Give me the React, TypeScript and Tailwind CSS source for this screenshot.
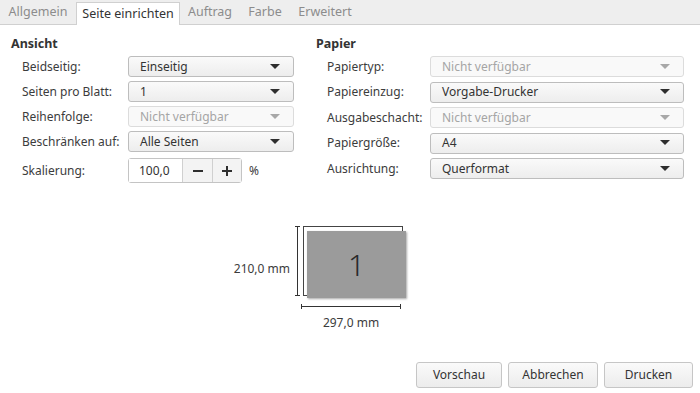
import React from 'react';

const font = { fontFamily: '"Noto Sans", "Open Sans", sans-serif' };

const tabs = [
  { label: 'Allgemein', w: 'w-[76px]' },
  { label: 'Seite einrichten', w: 'w-[104px]', active: true },
  { label: 'Auftrag', w: 'w-[60px]' },
  { label: 'Farbe', w: 'w-[50px]' },
  { label: 'Erweitert', w: 'w-[70px]' },
];

function Caret({ disabled }: { disabled?: boolean }) {
  return (
    <svg width="10" height="6" viewBox="0 0 10 6">
      <path d="M0 0 L10 0 L5 5 Z" fill={disabled ? '#a8a8a8' : '#2e2e2e'} />
    </svg>
  );
}

function Combo({ value, disabled }: { value: string; disabled?: boolean }) {
  return (
    <div
      className={
        'flex h-[21px] w-full items-center justify-between rounded-[3px] border pl-[11px] pr-[13px] ' +
        (disabled
          ? 'border-[#dcdcdc] bg-[#f9f9f9] text-[#a5a5a5]'
          : 'border-[#bdbdbd] bg-gradient-to-b from-[#fafafa] to-[#ededed] text-[#333]')
      }
    >
      <span>{value}</span>
      <Caret disabled={disabled} />
    </div>
  );
}

function Row({ label, children }: { label: string; children: React.ReactNode }) {
  return (
    <div className="flex h-[21px] items-center">
      <span className="shrink-0">{label}</span>
      {children}
    </div>
  );
}

export default function App() {
  return (
    <div className="flex h-[393px] w-[700px] flex-col overflow-hidden bg-white text-[12px] text-[#3c3c3c]" style={font}>
      {/* tab bar */}
      <div className="flex h-[25px] shrink-0 items-end border-b border-[#d0d0d0] bg-[#eeeeee] text-[12.5px]">
        {tabs.map((t) =>
          t.active ? (
            <div
              key={t.label}
              className={`${t.w} -mb-px flex h-[23px] items-center justify-center border border-b-0 border-[#d0d0d0] bg-white text-[#333]`}
            >
              {t.label}
            </div>
          ) : (
            <div key={t.label} className={`${t.w} flex h-[23px] items-center justify-center text-[#8c8c8c]`}>
              {t.label}
            </div>
          )
        )}
      </div>

      {/* settings */}
      <div className="flex pt-[10px]">
        <div className="w-[294px] pl-[11px]">
          <div className="h-[20px] text-[12.5px] font-bold text-[#333]">Ansicht</div>
          <div className="mt-[1px] flex flex-col gap-[4px] pl-[11px]">
            <Row label="Beidseitig:">
              <div className="ml-auto w-[166px]"><Combo value="Einseitig" /></div>
            </Row>
            <Row label="Seiten pro Blatt:">
              <div className="ml-auto w-[166px]"><Combo value="1" /></div>
            </Row>
            <Row label="Reihenfolge:">
              <div className="ml-auto w-[166px]"><Combo value="Nicht verfügbar" disabled /></div>
            </Row>
            <Row label="Beschränken auf:">
              <div className="ml-auto w-[166px]"><Combo value="Alle Seiten" /></div>
            </Row>
            <div className="mt-[2px] flex h-[25px] items-center">
              <span className="w-[106px] shrink-0">Skalierung:</span>
              <div className="flex h-[25px] rounded-[3px] border border-[#c4c4c4]">
                <div className="flex w-[53px] items-center bg-white pl-[10px] text-[#333]">100,0</div>
                <div className="flex w-[30px] items-center justify-center border-l border-[#d0d0d0] bg-[#f3f3f3]">
                  <svg width="10" height="10" viewBox="0 0 10 10"><path d="M0 5 H10" stroke="#2e2e2e" strokeWidth="2" /></svg>
                </div>
                <div className="flex w-[29px] items-center justify-center border-l border-[#d0d0d0] bg-[#f3f3f3]">
                  <svg width="10" height="10" viewBox="0 0 10 10"><path d="M0 5 H10 M5 0 V10" stroke="#2e2e2e" strokeWidth="2" /></svg>
                </div>
              </div>
              <span className="ml-[7px]">%</span>
            </div>
          </div>
        </div>

        <div className="w-[390px] pl-[22px]">
          <div className="h-[20px] text-[12.5px] font-bold text-[#333]">Papier</div>
          <div className="mt-[1px] flex flex-col gap-[4.5px] pl-[11px]">
            <Row label="Papiertyp:">
              <div className="ml-auto w-[254px]"><Combo value="Nicht verfügbar" disabled /></div>
            </Row>
            <Row label="Papiereinzug:">
              <div className="ml-auto w-[254px]"><Combo value="Vorgabe-Drucker" /></div>
            </Row>
            <Row label="Ausgabeschacht:">
              <div className="ml-auto w-[254px]"><Combo value="Nicht verfügbar" disabled /></div>
            </Row>
            <Row label="Papiergröße:">
              <div className="ml-auto w-[254px]"><Combo value="A4" /></div>
            </Row>
            <Row label="Ausrichtung:">
              <div className="ml-auto w-[254px]"><Combo value="Querformat" /></div>
            </Row>
          </div>
        </div>
      </div>

      {/* preview */}
      <div className="mt-[43px] flex flex-col pl-[230px]">
        <div className="flex items-center">
          <span className="mt-[16px] w-[60px] text-right">210,0 mm</span>
          <div className="ml-[5px] flex h-[70px] w-[5px] flex-col items-center">
            <div className="h-px w-[5px] bg-[#333]" />
            <div className="w-px flex-1 bg-[#333]" />
            <div className="h-px w-[5px] bg-[#333]" />
          </div>
          <div className="relative ml-[3px] h-[70px] w-[100px] border border-[#444] bg-white">
            <div className="absolute left-[3px] top-[4px] flex h-[67px] w-[99px] items-center justify-center bg-[#9b9b9b] text-[30px] font-light text-[#2a2a2a] shadow-[1px_1px_2px_rgba(0,0,0,0.35)]">
              1
            </div>
          </div>
        </div>
        <div className="ml-[71px] mt-[8px] flex h-[5px] w-[100px] items-center">
          <div className="h-[5px] w-px bg-[#333]" />
          <div className="h-px flex-1 bg-[#333]" />
          <div className="h-[5px] w-px bg-[#333]" />
        </div>
        <div className="ml-[71px] mt-[5px] w-[100px] text-center">297,0 mm</div>
      </div>

      {/* buttons */}
      <div className="mt-auto mb-[5px] flex justify-end gap-[6px] pr-[7px]">
        <button className="h-[26px] w-[86px] rounded-[3px] border border-[#c6c6c6] bg-gradient-to-b from-[#fafafa] to-[#ececec] text-[#333]">Vorschau</button>
        <button className="h-[26px] w-[90px] rounded-[3px] border border-[#c6c6c6] bg-gradient-to-b from-[#fafafa] to-[#ececec] text-[#333]">Abbrechen</button>
        <button className="h-[26px] w-[89px] rounded-[3px] border border-[#c6c6c6] bg-gradient-to-b from-[#fafafa] to-[#ececec] text-[#333]">Drucken</button>
      </div>
    </div>
  );
}
